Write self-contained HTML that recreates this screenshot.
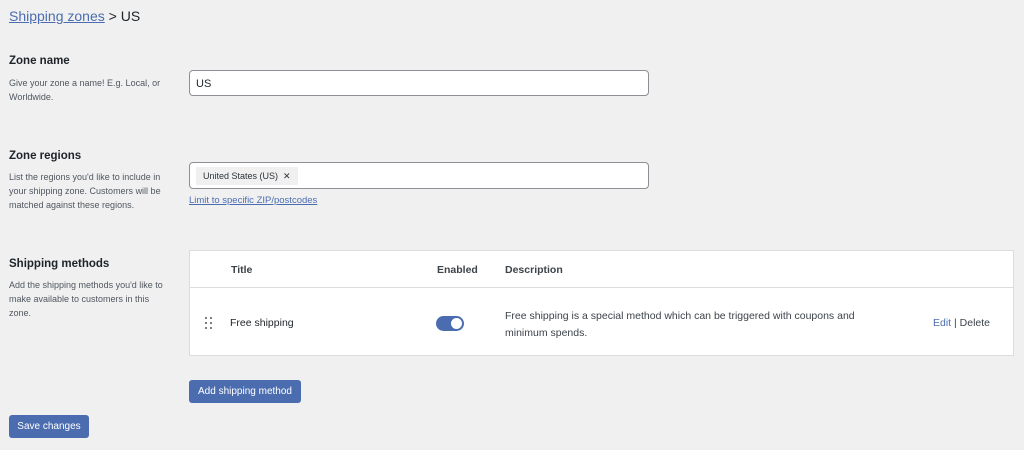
<!DOCTYPE html>
<html><head><style>
body{margin:0;width:1024px;height:450px;background:#f0f0f1;font-family:"Liberation Sans",sans-serif;color:#1d2327;position:relative;overflow:hidden}
.a{position:absolute}
h3{margin:0;font-size:11.5px;font-weight:bold;position:absolute}
.d{font-size:9px;color:#50575e;line-height:14px;position:absolute;width:160px}
.inp{position:absolute;background:#fff;border:1px solid #8c8f94;border-radius:4px;box-sizing:border-box}
.btn{position:absolute;background:#4b6db0;color:#fff;font-size:10px;border-radius:3px;box-sizing:border-box;display:flex;align-items:center;justify-content:center}
.dot{position:absolute;width:2px;height:2px;background:#50575e;border-radius:1px}
</style></head><body>
<div class="a" style="left:9px;top:8px;font-size:14px"><span style="color:#4b6db0;text-decoration:underline">Shipping zones</span> &gt; US</div>
<h3 style="left:9px;top:55px">Zone name</h3>
<div class="d" style="left:9px;top:76px">Give your zone a name! E.g. Local, or Worldwide.</div>
<div class="inp" style="left:189px;top:70px;width:460px;height:26px;font-size:11px;padding:7px 6px">US</div>
<h3 style="left:9px;top:150px">Zone regions</h3>
<div class="d" style="left:9px;top:170px">List the regions you'd like to include in your shipping zone. Customers will be matched against these regions.</div>
<div class="inp" style="left:189px;top:162px;width:460px;height:27px"><div class="a" style="left:6px;top:4px;height:18px;background:#f0f0f1;padding:0 7px;font-size:9px;line-height:18px;color:#2c3338">United States (US) &nbsp;✕</div></div>
<div class="a" style="left:189px;top:195px;font-size:9.5px;color:#4b6db0;text-decoration:underline">Limit to specific ZIP/postcodes</div>
<h3 style="left:9px;top:258px">Shipping methods</h3>
<div class="d" style="left:9px;top:278px">Add the shipping methods you'd like to make available to customers in this zone.</div>
<div class="a" style="left:189px;top:250px;width:825px;height:106px;background:#fff;border:1px solid #dcdcde;box-sizing:border-box;font-size:10.5px">
<div class="a" style="left:0;top:36px;width:100%;border-top:1px solid #dcdcde"></div>
<div class="a" style="left:41px;top:13px;font-weight:bold;color:#3c434a">Title</div>
<div class="a" style="left:247px;top:13px;font-weight:bold;color:#3c434a">Enabled</div>
<div class="a" style="left:315px;top:13px;font-weight:bold;color:#3c434a">Description</div>
<div class="dot" style="left:15px;top:66px"></div><div class="dot" style="left:20px;top:66px"></div>
<div class="dot" style="left:15px;top:71px"></div><div class="dot" style="left:20px;top:71px"></div>
<div class="dot" style="left:15px;top:76px"></div><div class="dot" style="left:20px;top:76px"></div>
<div class="a" style="left:40px;top:66px">Free shipping</div>
<div class="a" style="left:246px;top:65px;width:28px;height:15px;border-radius:8px;background:#4b6db0"><div class="a" style="right:2px;top:2px;width:11px;height:11px;border-radius:50%;background:#fff"></div></div>
<div class="a" style="left:315px;top:57px;width:380px;line-height:17px;color:#3c434a">Free shipping is a special method which can be triggered with coupons and minimum spends.</div>
<div class="a" style="left:743px;top:66px;color:#3c434a"><span style="color:#4b6db0">Edit</span> | Delete</div>
</div>
<div class="btn" style="left:189px;top:380px;width:112px;height:23px">Add shipping method</div>
<div class="btn" style="left:9px;top:415px;width:80px;height:23px">Save changes</div>
</body></html>
